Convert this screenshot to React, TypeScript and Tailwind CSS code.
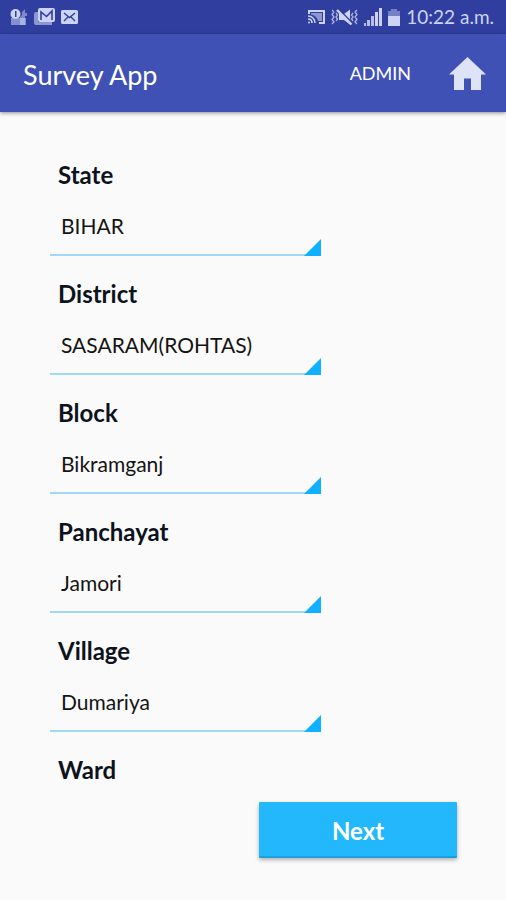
import { useState } from 'react'

const fields = [
  { id: 'state', label: 'State', options: ['BIHAR'] },
  { id: 'district', label: 'District', options: ['SASARAM(ROHTAS)'] },
  { id: 'block', label: 'Block', options: ['Bikramganj'] },
  { id: 'panchayat', label: 'Panchayat', options: ['Jamori'] },
  { id: 'village', label: 'Village', options: ['Dumariya'] },
]

function StatusBar() {
  return (
    <div className="flex h-[34px] items-center justify-between bg-[#303f9f] pl-[10px] pr-3 text-[#ccd3f5]">
      <div className="flex items-center gap-[6px]">
        {/* clock / activity */}
        <svg width="18" height="18" viewBox="0 0 18 18" fill="currentColor">
          <path d="M1 10h15v7H1z" opacity="0.55" />
          <path d="M10 9l2-2V4l3-3v4h2v3h-2v9h-5z" opacity="0.5" />
          <circle cx="5.5" cy="6" r="5" />
          <path d="M5 3h1.5v6H5z" fill="#303f9f" />
        </svg>
        {/* stacked mail */}
        <svg width="21" height="18" viewBox="0 0 21 18" fill="currentColor">
          <path d="M0 6q0-2 2-2h2v10h14v3H2q-2 0-2-2z" opacity="0.6" />
          <rect x="4" y="0" width="17" height="14" rx="2" />
          <path d="M7 12V4l5.5 4.5L18 3v9" fill="none" stroke="#303f9f" strokeWidth="1.6" />
        </svg>
        <svg width="17" height="14" viewBox="0 0 17 14" fill="currentColor">
          <rect width="17" height="14" rx="1.5" />
          <path d="M3 3l5.5 4.5L14 3M3 11l4-4M14 11l-4-4" fill="none" stroke="#303f9f" strokeWidth="1.4" />
        </svg>
      </div>

      <div className="flex items-center gap-[6px]">
        {/* cast */}
        <svg width="17" height="14" viewBox="0 0 17 14" fill="none" stroke="currentColor">
          <path d="M1 4V1h15v12h-5" strokeWidth="2" />
          <path d="M3 3h11v8h-4C9 7 6 5 3 4.500z" fill="currentColor" stroke="none" opacity="0.6" />
          <path d="M0 6c4 0 7 3 7 7M0 9c2.5 0 4 1.5 4 4" strokeWidth="1.6" />
          <circle cx="1" cy="12.5" r="1" fill="currentColor" stroke="none" />
        </svg>
        {/* vibrate / muted */}
        <svg width="27" height="18" viewBox="0 0 27 18" fill="none" stroke="currentColor">
          <path d="M1 2l2 2-2 2.500L3 9l-2 2.500L3 14l-2 2M5 5l1.500 2L5 9l1.500 2L5 13" strokeWidth="1.3" opacity="0.8" />
          <path d="M26 2l-2 2 2 2.500L24 9l2 2.500-2 2.500 2 2M22 5l-1.500 2L22 9l-1.500 2 1.500 2" strokeWidth="1.3" opacity="0.8" />
          <path d="M8 6h5l6-4.500v15L13 12H8z" fill="currentColor" stroke="none" />
          <path d="M8 1.500l13 13" stroke="#303f9f" strokeWidth="1.6" />
          <path d="M6 2l14.500 14.500" strokeWidth="2.4" />
        </svg>
        <svg width="18" height="18" viewBox="0 0 18 18" fill="currentColor">
          <path d="M0 15h2v3H0zM3 12h3v6H3zM7 8h3v10H7z" opacity="0.85" />
          <path d="M11 4h3v14h-3zM15 0h3v18h-3z" />
        </svg>
        <svg width="12" height="17" viewBox="0 0 12 17" fill="currentColor">
          <path d="M3 0h6v2h3v6H0V2h3z" opacity="0.45" />
          <path d="M0 7h12v10H0z" />
        </svg>
        <span className="text-[19px] leading-6 whitespace-nowrap">10:22 a.m.</span>
      </div>
    </div>
  )
}

function AppBar() {
  return (
    <header className="relative flex h-[78px] items-center justify-between bg-[#3f51b5] pl-[23px] pr-5 text-white shadow-[0_1px_4px_rgba(0,0,0,0.45)]">
      <h1 className="pt-1 text-[27px] leading-8">Survey App</h1>
      <div className="flex items-center gap-[38px]">
        <button className="text-[18px] leading-6">ADMIN</button>
        <button aria-label="Home" className="text-[#dfe3f8]">
          <svg width="37" height="33" viewBox="0 0 37 33" fill="currentColor">
            <path d="M18.5 0L37 17.500h-5V33H22V21.500h-7V33H5V17.500H0z" />
          </svg>
        </button>
      </div>
    </header>
  )
}

export default function App() {
  const [values, setValues] = useState<Record<string, string>>({})

  return (
    <div className="min-h-screen bg-[#fafafa] font-['Lato','Open_Sans',sans-serif]">
      <StatusBar />
      <AppBar />

      <main className="flex flex-col pt-12 pr-[49px] pb-10 pl-[50px]">
        <div className="flex w-2/3 flex-col gap-[23px]">
          {fields.map(f => (
            <div key={f.id} className="flex flex-col">
              <label htmlFor={f.id} className="pl-2 text-[24px] font-bold leading-[30px] text-[#0d131c]">
                {f.label}
              </label>
              <div className="relative">
                <select
                  id={f.id}
                  value={values[f.id] ?? f.options[0]}
                  onChange={e => setValues(prev => ({ ...prev, [f.id]: e.target.value }))}
                  className="block h-[66px] w-full appearance-none border-b-2 border-[#9fd8f8] pl-[11px] pr-6 pt-2 text-[21px] leading-7 text-[#141414] focus:outline-none"
                >
                  {f.options.map(o => <option key={o}>{o}</option>)}
                </select>
                <svg className="pointer-events-none absolute right-0 bottom-0 text-[#0fb0ff]" width="17" height="17" viewBox="0 0 17 17" fill="currentColor">
                  <path d="M17 0v17H0z" />
                </svg>
              </div>
            </div>
          ))}
          <p className="pl-2 text-[24px] font-bold leading-[30px] text-[#0d131c]">Ward</p>
        </div>

        <button className="mt-[17px] h-14 w-[198px] self-end rounded-[1px] border-b-2 border-[#1a9fe0] bg-[#22b8fb] pt-1 text-[24px] font-bold leading-8 text-white shadow-[0_2px_4px_rgba(0,0,0,0.3)]">
          Next
        </button>
      </main>
    </div>
  )
}
